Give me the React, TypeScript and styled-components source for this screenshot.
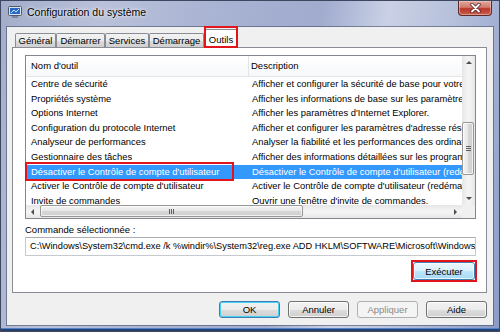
import styled, { createGlobalStyle } from "styled-components";

const GlobalStyle = createGlobalStyle`
  html, body {
    margin: 0;
    padding: 0;
  }
  body {
    width: 500px;
    height: 332px;
    overflow: hidden;
    font-family: "Liberation Sans", Arial, sans-serif;
  }
`;

const UI_FONT = `"Liberation Sans", Arial, sans-serif`;
const RED = "#e3151c";

const Window = styled.div`
  width: 500px;
  height: 332px;
  box-sizing: border-box;
  display: flex;
  flex-direction: column;
  border: 1px solid #3e4760;
  background: linear-gradient(
    100deg,
    #a3adca 0%,
    #b9c1da 18%,
    #a8b2d2 40%,
    #a0abce 58%,
    #cad1e5 70%,
    #b6c0db 82%,
    #8a9bc8 100%
  );
  box-shadow: inset 0 -2px 0 #27406e, inset 0 -3px 0 #4f84cf;
`;

const TitleBar = styled.div`
  height: 26px;
  display: flex;
  align-items: flex-start;
  padding-left: 7px;
`;

const TitleIcon = styled.svg`
  margin-top: 4px;
  flex: none;
`;

const Title = styled.div`
  margin: 5px 0 0 5px;
  font: 10.5px ${UI_FONT};
  color: #000;
  text-shadow: 0 0 5px rgba(255, 255, 255, 0.9), 0 0 2px rgba(255, 255, 255, 0.8);
`;

const CloseButton = styled.div`
  margin-left: auto;
  margin-right: 7px;
  width: 34px;
  height: 15px;
  box-sizing: border-box;
  border: 1px solid #5b2a2a;
  border-top: none;
  border-radius: 0 0 4px 4px;
  background: linear-gradient(#dfa99f 0%, #d07a6c 45%, #b8372b 55%, #c8604f 100%);
  box-shadow: inset 0 0 0 1px rgba(255, 210, 200, 0.5);
  display: flex;
  align-items: center;
  justify-content: center;
`;

const Client = styled.div`
  flex: 1;
  margin: 0 6px 6px;
  background: #f0f0f0;
  box-shadow: 0 0 0 1px rgba(60, 70, 95, 0.55);
  padding: 6px 6px 7px 5px;
  display: flex;
  flex-direction: column;
`;

const TabStrip = styled.div`
  height: 14px;
  display: flex;
  align-items: flex-end;
  padding-left: 3px;
  position: relative;
  z-index: 1;
`;

const Tab = styled.div<{ $width: number; $active?: boolean }>`
  position: relative;
  width: ${(p) => p.$width}px;
  height: ${(p) => (p.$active ? 19 : 14)}px;
  margin-bottom: ${(p) => (p.$active ? -1 : 0)}px;
  box-sizing: border-box;
  border: 1px solid #898c95;
  border-bottom: none;
  border-radius: 2px 2px 0 0;
  background: ${(p) =>
    p.$active
      ? "#ffffff"
      : "linear-gradient(#f2f2f2 0%, #ebebeb 50%, #dddddd 51%, #cfcfcf 100%)"};
  font: 9.5px ${UI_FONT};
  color: #000;
  display: flex;
  align-items: center;
  justify-content: center;
  padding-top: ${(p) => (p.$active ? 1 : 0)}px;
`;

const Highlight = styled.div`
  position: absolute;
  border: 2px solid ${RED};
  pointer-events: none;
`;

const TabMark = styled(Highlight)`
  top: -4px;
  left: -1px;
  right: -1px;
  bottom: 0;
`;

const Panel = styled.div`
  height: 246px;
  box-sizing: border-box;
  border: 1px solid #898c95;
  background: #fff;
  padding: 7px 10px 12px 12px;
  display: flex;
  flex-direction: column;
`;

const ListView = styled.div`
  position: relative;
  height: 164px;
  box-sizing: border-box;
  border: 1px solid #828790;
  display: grid;
  grid-template-columns: 1fr 13px;
  grid-template-rows: 1fr 13px;
  background: #fff;
`;

const ListContent = styled.div`
  overflow: hidden;
  min-width: 0;
`;

const Columns = styled.div`
  display: grid;
  grid-template-columns: 223px 1fr;
  white-space: nowrap;
`;

const HeaderRow = styled(Columns)`
  height: 21px;
  box-sizing: border-box;
  border-bottom: 1px solid #e5e5e5;
  background: linear-gradient(#ffffff, #f7f8fa);
`;

const HeaderCell = styled.div<{ $first?: boolean }>`
  font: 9.5px ${UI_FONT};
  line-height: 20px;
  padding-left: ${(p) => (p.$first ? 5 : 2)}px;
  border-right: ${(p) => (p.$first ? "1px solid #e3e4e6" : "none")};
  overflow: hidden;
`;

const Row = styled(Columns)<{ $selected?: boolean }>`
  height: 14.6px;
  line-height: 14.6px;
  background: ${(p) => (p.$selected ? "#3399ff" : "transparent")};
  color: ${(p) => (p.$selected ? "#fff" : "#000")};
  font: 9.4px ${UI_FONT};
`;

const Cell = styled.div<{ $first?: boolean }>`
  padding-left: ${(p) => (p.$first ? 5 : 3)}px;
  overflow: hidden;
  line-height: 14.6px;
`;

const RowMark = styled(Highlight)`
  left: -1px;
  top: 106px;
  width: 209px;
  height: 19px;
  box-sizing: border-box;
`;

const ScrollBar = styled.div<{ $vertical?: boolean }>`
  display: flex;
  flex-direction: ${(p) => (p.$vertical ? "column" : "row")};
  background: ${(p) =>
    p.$vertical
      ? "linear-gradient(to right, #e6e6e6, #f3f3f3 40%, #f3f3f3 60%, #e6e6e6)"
      : "linear-gradient(#e6e6e6, #f3f3f3 40%, #f3f3f3 60%, #e6e6e6)"};
`;

const ArrowButton = styled.div`
  width: 13px;
  height: 13px;
  flex: none;
  display: flex;
  align-items: center;
  justify-content: center;
`;

const Arrow = styled.div<{ $dir: "up" | "down" | "left" | "right" }>`
  width: 0;
  height: 0;
  border: 3px solid transparent;
  ${(p) =>
    p.$dir === "up"
      ? "border-bottom: 3px solid #4d4d4d; border-top-width: 0; margin-top: -1px;"
      : p.$dir === "down"
      ? "border-top: 3px solid #4d4d4d; border-bottom-width: 0;"
      : p.$dir === "left"
      ? "border-right: 3px solid #4d4d4d; border-left-width: 0;"
      : "border-left: 3px solid #4d4d4d; border-right-width: 0;"}
`;

const Track = styled.div<{ $vertical?: boolean }>`
  flex: 1;
  display: flex;
  flex-direction: ${(p) => (p.$vertical ? "column" : "row")};
`;

const Thumb = styled.div<{ $vertical?: boolean; $offset: number; $size: number }>`
  box-sizing: border-box;
  ${(p) =>
    p.$vertical
      ? `margin-top: ${p.$offset}px; height: ${p.$size}px; width: 12px;
         background: linear-gradient(to right, #f5f5f5, #e6e6e6 50%, #d8d8d8 51%, #cfcfcf);
         flex-direction: column;`
      : `margin-left: ${p.$offset}px; width: ${p.$size}px; height: 12px;
         background: linear-gradient(#f5f5f5, #e6e6e6 50%, #d8d8d8 51%, #cfcfcf);
         flex-direction: row;`}
  border: 1px solid #979797;
  border-radius: 2px;
  box-shadow: inset 0 0 0 1px rgba(255, 255, 255, 0.7);
  display: flex;
  align-items: center;
  justify-content: center;
  gap: 1px;
`;

const GripLine = styled.div<{ $vertical?: boolean }>`
  background: #5e5e5e;
  ${(p) => (p.$vertical ? "width: 5px; height: 1px;" : "width: 1px; height: 5px;")}
`;

const Corner = styled.div`
  background: #f0f0f0;
`;

const Label = styled.div`
  margin-top: 5px;
  height: 12px;
  line-height: 12px;
  font: 9.5px ${UI_FONT};
  color: #000;
`;

const TextBox = styled.div`
  margin-top: 1px;
  height: 19px;
  box-sizing: border-box;
  border: 1px solid #c5c9d0;
  border-top-color: #abadb3;
  padding-left: 4px;
  font: 9.25px ${UI_FONT};
  line-height: 17px;
  white-space: nowrap;
  overflow: hidden;
`;

const ButtonRow = styled.div<{ $top: number; $inset?: number }>`
  margin-top: ${(p) => p.$top}px;
  padding-right: ${(p) => p.$inset ?? 0}px;
  display: flex;
  justify-content: flex-end;
  gap: 8px;
`;

type Variant = "normal" | "default" | "hover" | "disabled";

const Button = styled.div<{ $variant?: Variant; $width?: number; $height?: number }>`
  position: relative;
  width: ${(p) => p.$width ?? 61}px;
  height: ${(p) => p.$height ?? 17}px;
  box-sizing: border-box;
  border-radius: 3px;
  font: 9.5px ${UI_FONT};
  display: flex;
  align-items: center;
  justify-content: center;
  border: 1px solid
    ${(p) =>
      p.$variant === "disabled"
        ? "#adb2b5"
        : p.$variant === "default" || p.$variant === "hover"
        ? "#3c7fb1"
        : "#707070"};
  color: ${(p) => (p.$variant === "disabled" ? "#8a8a8a" : "#000")};
  background: ${(p) =>
    p.$variant === "disabled"
      ? "#f4f4f4"
      : p.$variant === "hover"
      ? "linear-gradient(#eaf6fd 0%, #d9f0fc 50%, #bee6fd 51%, #a7d9f5 100%)"
      : "linear-gradient(#f2f2f2 0%, #ebebeb 50%, #dddddd 51%, #cfcfcf 100%)"};
  box-shadow: ${(p) =>
    p.$variant === "default"
      ? "inset 0 0 0 1px #48d0f5"
      : p.$variant === "disabled"
      ? "none"
      : "inset 0 0 0 1px rgba(255,255,255,0.75)"};
`;

const ButtonMark = styled(Highlight)`
  inset: -3px;
`;

const tools: [string, string][] = [
  ["Centre de sécurité", "Afficher et configurer la sécurité de base pour votre ordinateur."],
  ["Propriétés système", "Afficher les informations de base sur les paramètres de l'ordinateur."],
  ["Options Internet", "Afficher les paramètres d'Internet Explorer."],
  ["Configuration du protocole Internet", "Afficher et configurer les paramètres d'adresse réseau."],
  ["Analyseur de performances", "Analyser la fiabilité et les performances des ordinateurs."],
  ["Gestionnaire des tâches", "Afficher des informations détaillées sur les programmes en cours."],
  ["Désactiver le Contrôle de compte d'utilisateur", "Désactiver le Contrôle de compte d'utilisateur (redémarrage requis)."],
  ["Activer le Contrôle de compte d'utilisateur", "Activer le Contrôle de compte d'utilisateur (redémarrage requis)."],
  ["Invite de commandes", "Ouvrir une fenêtre d'invite de commandes."],
];

const tabs: [string, number][] = [
  ["Général", 41],
  ["Démarrer", 49],
  ["Services", 44],
  ["Démarrage", 55],
  ["Outils", 34],
];

const SELECTED = 6;

export default function App() {
  return (
    <>
      <GlobalStyle />
      <Window>
        <TitleBar>
          <TitleIcon width="14" height="14" viewBox="0 0 14 14">
            <rect x="0.5" y="1.5" width="13" height="9" rx="1" fill="#dde2ea" stroke="#4f596d" />
            <rect x="2" y="3" width="10" height="6" fill="#2c69c4" />
            <path d="M3 8 L6 5 L8 7 L11 4" stroke="#bfe3ff" strokeWidth="1" fill="none" />
            <rect x="4" y="11" width="6" height="2" fill="#7d8598" />
          </TitleIcon>
          <Title>Configuration du système</Title>
          <CloseButton>
            <svg width="13" height="10" viewBox="0 0 13 10">
              <path d="M3 1.5 L10 8.5 M10 1.5 L3 8.5" stroke="#5a2020" strokeWidth="3.4" strokeLinecap="round" />
              <path d="M3 1.5 L10 8.5 M10 1.5 L3 8.5" stroke="#ffffff" strokeWidth="1.8" strokeLinecap="round" />
            </svg>
          </CloseButton>
        </TitleBar>
        <Client>
          <TabStrip>
            {tabs.map(([label, width], i) => {
              const active = i === tabs.length - 1;
              return (
                <Tab key={label} $width={width} $active={active}>
                  {label}
                  {active && <TabMark />}
                </Tab>
              );
            })}
          </TabStrip>
          <Panel>
            <ListView>
              <ListContent>
                <HeaderRow>
                  <HeaderCell $first>Nom d'outil</HeaderCell>
                  <HeaderCell>Description</HeaderCell>
                </HeaderRow>
                {tools.map(([name, desc], i) => (
                  <Row key={name} $selected={i === SELECTED}>
                    <Cell $first>{name}</Cell>
                    <Cell>{desc}</Cell>
                  </Row>
                ))}
              </ListContent>
              <ScrollBar $vertical>
                <ArrowButton>
                  <Arrow $dir="up" />
                </ArrowButton>
                <Track $vertical>
                  <Thumb $vertical $offset={53} $size={53}>
                    <GripLine $vertical />
                    <GripLine $vertical />
                    <GripLine $vertical />
                  </Thumb>
                </Track>
                <ArrowButton>
                  <Arrow $dir="down" />
                </ArrowButton>
              </ScrollBar>
              <ScrollBar>
                <ArrowButton>
                  <Arrow $dir="left" />
                </ArrowButton>
                <Track>
                  <Thumb $offset={1} $size={263}>
                    <GripLine />
                    <GripLine />
                    <GripLine />
                  </Thumb>
                </Track>
                <ArrowButton>
                  <Arrow $dir="right" />
                </ArrowButton>
              </ScrollBar>
              <Corner />
              <RowMark />
            </ListView>
            <Label>Commande sélectionnée :</Label>
            <TextBox>
              C:\Windows\System32\cmd.exe /k %windir%\System32\reg.exe ADD HKLM\SOFTWARE\Microsoft\Windows\CurrentVersion\Policies\System /v EnableLUA /t REG_DWORD /d 0 /f
            </TextBox>
            <ButtonRow $top={6} $inset={1}>
              <Button $variant="hover" $width={62} $height={18}>
                Exécuter
                <ButtonMark />
              </Button>
            </ButtonRow>
          </Panel>
          <ButtonRow $top={8}>
            <Button $variant="default">OK</Button>
            <Button>Annuler</Button>
            <Button $variant="disabled">Appliquer</Button>
            <Button>Aide</Button>
          </ButtonRow>
        </Client>
      </Window>
    </>
  );
}
